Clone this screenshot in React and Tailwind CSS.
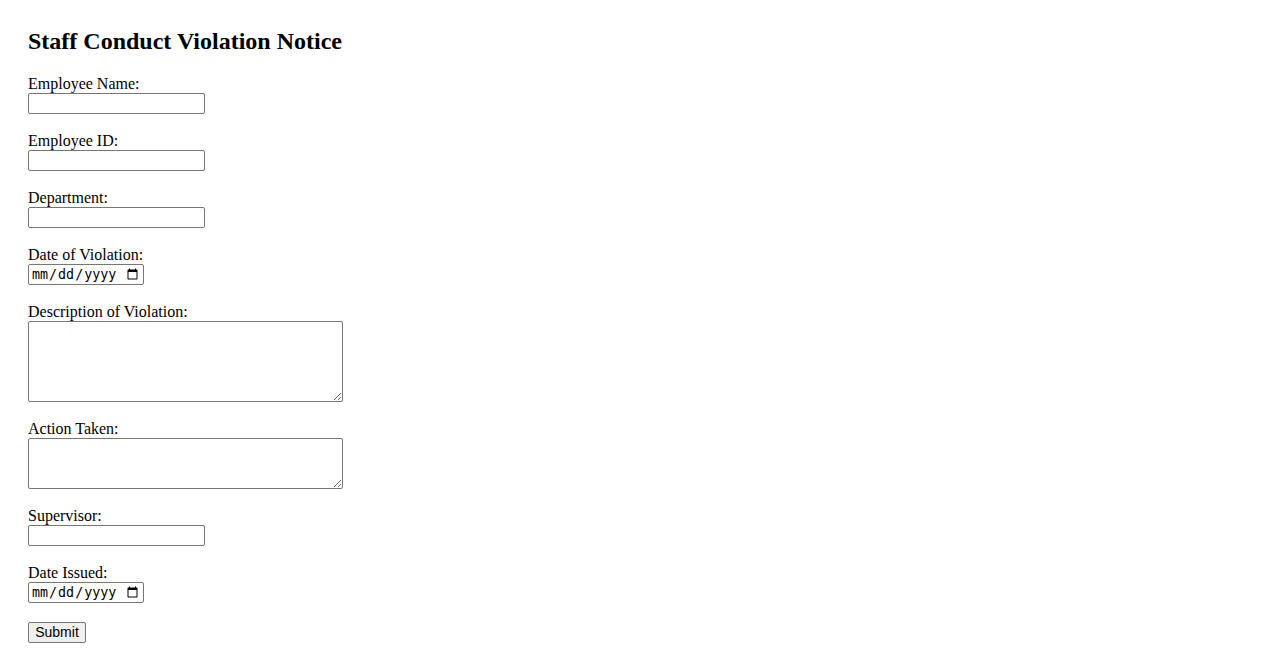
export default function App() {
  const textField = 'block w-[177px] h-[21px] border border-[#767676] rounded-[2px] px-[2px] bg-white';
  const dateField = "block w-[116px] h-[21px] border border-[#767676] rounded-[2px] px-[2px] bg-white text-[13.33px] font-['DejaVu_Sans_Mono',monospace]";
  const labelCls = 'block leading-[19px]';

  return (
    <div className="min-h-screen bg-white text-black font-['Liberation_Serif',serif] text-[16px] pt-[27px] px-[28px]">
      <h2 className="text-[24px] font-bold leading-[28px] mb-[19px]">Staff Conduct Violation Notice</h2>
      <form onSubmit={(e) => e.preventDefault()}>
        <div className="mb-[17px]">
          <label className={labelCls}>Employee Name:</label>
          <input type="text" className={textField} />
        </div>
        <div className="mb-[17px]">
          <label className={labelCls}>Employee ID:</label>
          <input type="text" className={textField} />
        </div>
        <div className="mb-[17px]">
          <label className={labelCls}>Department:</label>
          <input type="text" className={textField} />
        </div>
        <div className="mb-[17px]">
          <label className={labelCls}>Date of Violation:</label>
          <input type="date" className={dateField} />
        </div>
        <div className="mb-[17px]">
          <label className={labelCls}>Description of Violation:</label>
          <textarea className="block w-[315px] h-[81px] border border-[#767676] rounded-[2px] bg-white" />
        </div>
        <div className="mb-[17px]">
          <label className={labelCls}>Action Taken:</label>
          <textarea className="block w-[315px] h-[51px] border border-[#767676] rounded-[2px] bg-white" />
        </div>
        <div className="mb-[17px]">
          <label className={labelCls}>Supervisor:</label>
          <input type="text" className={textField} />
        </div>
        <div className="mb-[19px]">
          <label className={labelCls}>Date Issued:</label>
          <input type="date" className={dateField} />
        </div>
        <button type="submit" className="block w-[58px] h-[21px] border border-[#767676] rounded-[2px] bg-[#efefef] text-[14px] leading-[19px] font-['Liberation_Sans',Arial,sans-serif]">
          Submit
        </button>
      </form>
    </div>
  );
}
